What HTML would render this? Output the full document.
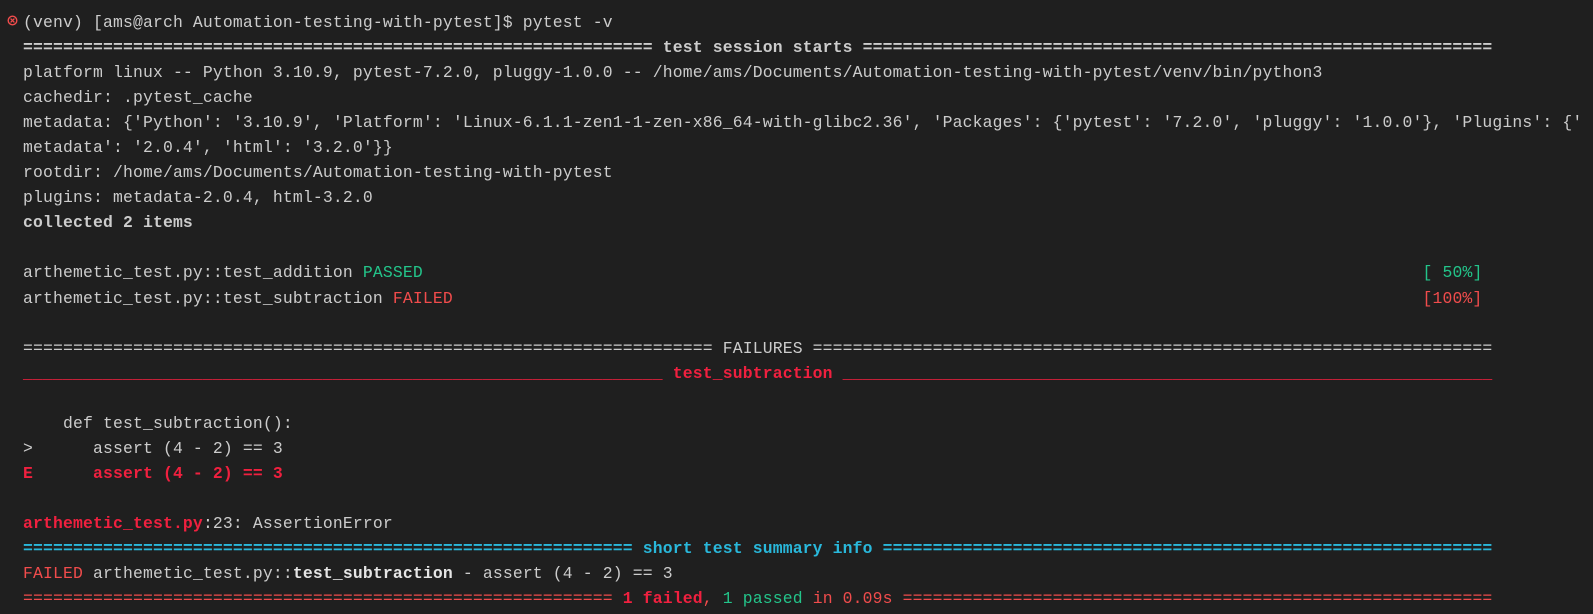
<!DOCTYPE html>
<html><head><meta charset="utf-8"><style>
html,body{margin:0;padding:0;background:#1f1f1f;width:1593px;height:614px;overflow:hidden}
pre{margin:0;position:absolute;left:23px;top:10px;font-family:"Liberation Mono","DejaVu Sans Mono",monospace;font-size:16.4px;letter-spacing:0.16px;line-height:25.05px;color:#cccccc;white-space:pre}
b{font-weight:bold}
.r{color:#f14c4c}.R{color:#f0203f;font-weight:bold}.g{color:#23c48a}.c{color:#29b8db;font-weight:bold}.w{color:#e5e5e5;font-weight:bold}
.ic{position:absolute;left:7px;top:15px}
</style></head><body>
<svg class="ic" width="11" height="11" viewBox="0 0 11 11"><circle cx="5.5" cy="5.5" r="4.3" fill="none" stroke="#f14c4c" stroke-width="1.4"/><path d="M3.6 3.6L7.4 7.4M7.4 3.6L3.6 7.4" stroke="#f14c4c" stroke-width="1.3"/></svg>
<pre>(venv) [ams@arch Automation-testing-with-pytest]$ pytest -v
<b>=============================================================== test session starts ===============================================================</b>
platform linux -- Python 3.10.9, pytest-7.2.0, pluggy-1.0.0 -- /home/ams/Documents/Automation-testing-with-pytest/venv/bin/python3
cachedir: .pytest_cache
metadata: {'Python': '3.10.9', 'Platform': 'Linux-6.1.1-zen1-1-zen-x86_64-with-glibc2.36', 'Packages': {'pytest': '7.2.0', 'pluggy': '1.0.0'}, 'Plugins': {'
metadata': '2.0.4', 'html': '3.2.0'}}
rootdir: /home/ams/Documents/Automation-testing-with-pytest
plugins: metadata-2.0.4, html-3.2.0
<b>collected 2 items</b>

arthemetic_test.py::test_addition <span class="g">PASSED</span>                                                                                                    <span class="g">[ 50%]</span>
arthemetic_test.py::test_subtraction <span class="r">FAILED</span>                                                                                                 <span class="r">[100%]</span>

===================================================================== FAILURES ====================================================================
<span class="R">________________________________________________________________ test_subtraction _________________________________________________________________</span>

    def test_subtraction():
&gt;      assert (4 - 2) == 3
<span class="R">E      assert (4 - 2) == 3</span>

<span class="R">arthemetic_test.py</span>:23: AssertionError
<span class="c">============================================================= short test summary info =============================================================</span>
<span class="r">FAILED</span> arthemetic_test.py::<span class="w">test_subtraction</span> - assert (4 - 2) == 3
<span class="r">=========================================================== <span class="R">1 failed</span>, <span class="g">1 passed</span><span class="r"> in 0.09s</span> ===========================================================</span></pre>
</body></html>
